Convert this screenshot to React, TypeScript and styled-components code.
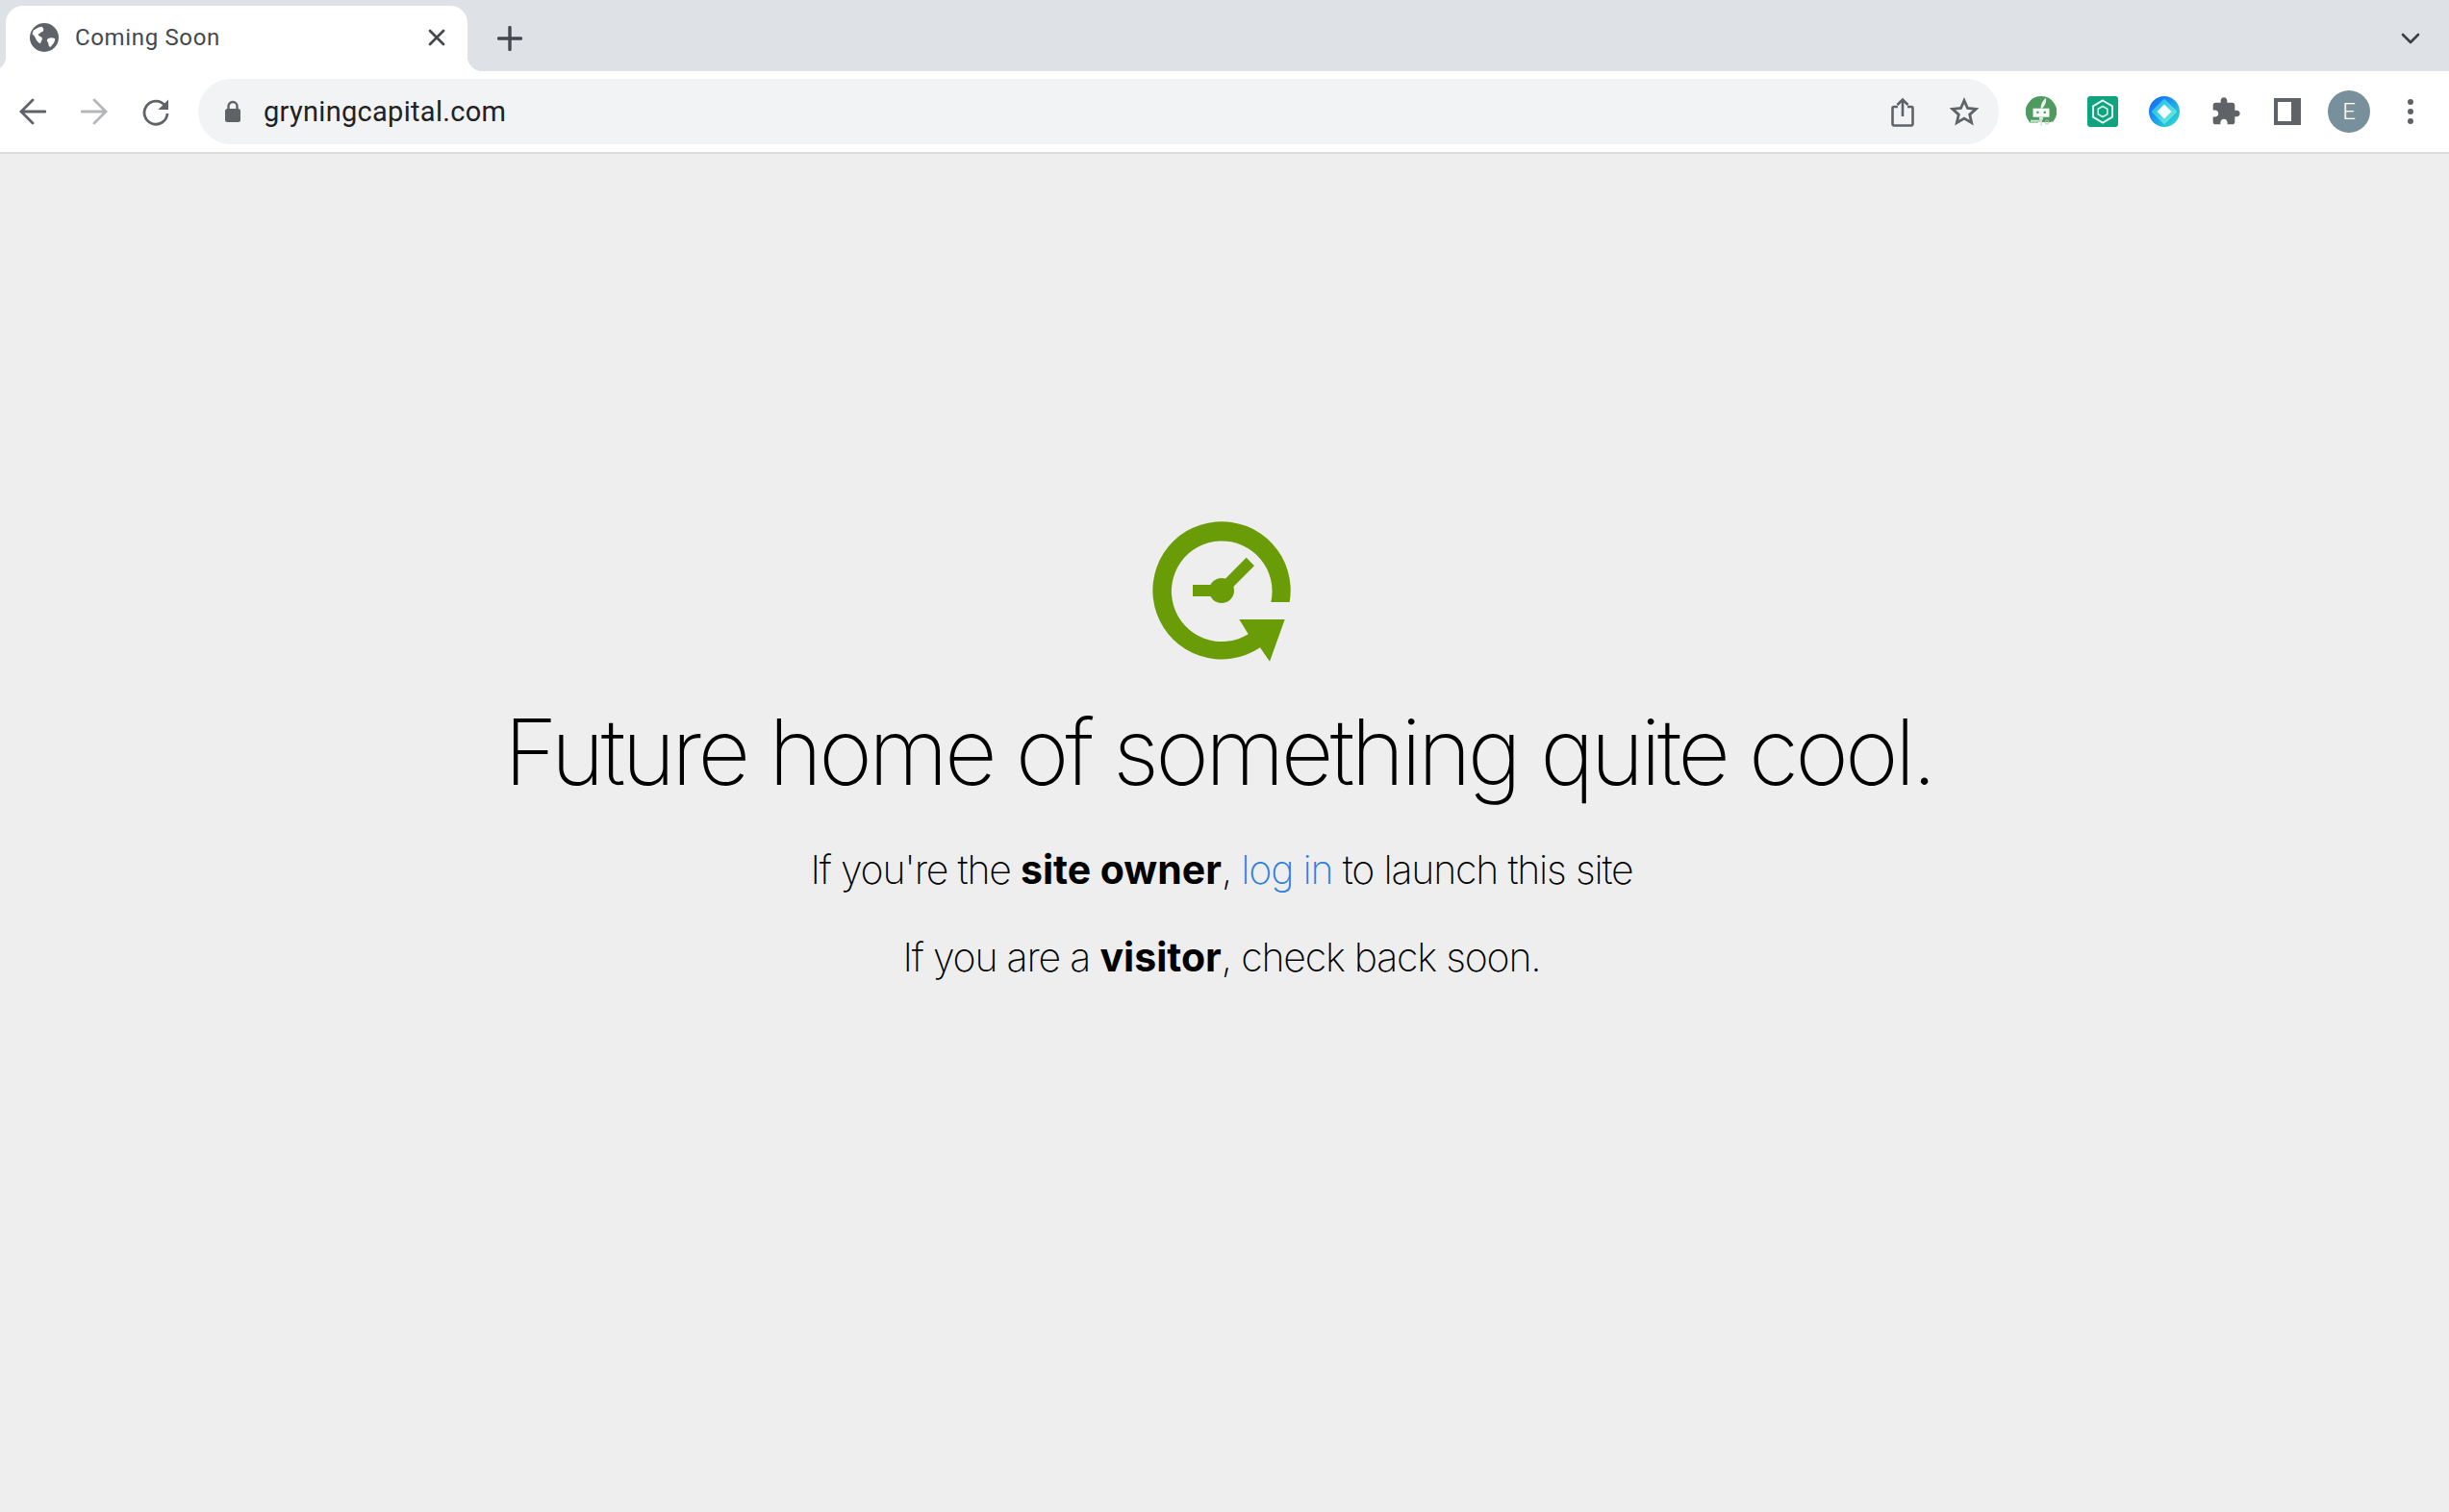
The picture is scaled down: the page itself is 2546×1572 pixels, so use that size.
import React from "react";
import styled, { createGlobalStyle } from "styled-components";

const GlobalStyle = createGlobalStyle`
  html, body {
    margin: 0;
    padding: 0;
    background: #eeeeee;
  }
  body {
    font-family: "Inter", "Liberation Sans", sans-serif;
  }
`;

const Page = styled.div`
  width: 2546px;
  height: 1572px;
  display: flex;
  flex-direction: column;
  overflow: hidden;
  background: #eeeeee;
`;

const TabStrip = styled.div`
  height: 74px;
  flex: none;
  display: flex;
  align-items: flex-end;
  background: #dee1e6;
  padding-left: 6px;
`;

const Tab = styled.div`
  position: relative;
  width: 480px;
  height: 68px;
  display: flex;
  align-items: center;
  box-sizing: border-box;
  padding: 0 22px 2px 25px;
  background: #ffffff;
  border-radius: 18px 18px 0 0;

  &::before,
  &::after {
    content: "";
    position: absolute;
    bottom: 0;
    width: 16px;
    height: 16px;
  }
  &::before {
    left: -16px;
    background: radial-gradient(circle at 0 0, transparent 16px, #ffffff 16.5px);
  }
  &::after {
    right: -16px;
    background: radial-gradient(circle at 100% 0, transparent 16px, #ffffff 16.5px);
  }
`;

const TabTitle = styled.span`
  flex: 1;
  margin-left: 17px;
  font-family: "Roboto", sans-serif;
  font-size: 24px;
  letter-spacing: 0.65px;
  color: #45494e;
`;

const StripButton = styled.div<{ $push?: boolean }>`
  width: 40px;
  height: 68px;
  display: flex;
  align-items: center;
  justify-content: center;
  margin-left: ${(p) => (p.$push ? "auto" : "24px")};
  margin-right: ${(p) => (p.$push ? "20px" : "0")};
`;

const Toolbar = styled.div`
  height: 84px;
  flex: none;
  box-sizing: content-box;
  display: flex;
  align-items: center;
  padding: 0 8px 0 2px;
  background: #ffffff;
  border-bottom: 2px solid #dcdcdc;
`;

const ToolButton = styled.div`
  width: 64px;
  height: 64px;
  flex: none;
  display: flex;
  align-items: center;
  justify-content: center;
`;

const Omnibox = styled.div`
  flex: 1;
  height: 68px;
  margin: 0 12px;
  display: flex;
  align-items: center;
  padding-left: 27px;
  padding-right: 4px;
  background: #f1f3f4;
  border-radius: 34px;
`;

const Url = styled.span`
  flex: 1;
  margin-left: 23px;
  font-family: "Roboto", sans-serif;
  font-size: 29px;
  letter-spacing: 0.3px;
  color: #202124;
`;

const Avatar = styled.div`
  width: 44px;
  height: 44px;
  border-radius: 50%;
  background: #78909c;
  color: #ffffff;
  display: flex;
  align-items: center;
  justify-content: center;
  font-family: "Roboto", sans-serif;
  font-size: 24px;
  font-weight: 300;
`;

const Main = styled.main`
  flex: 1;
  display: flex;
  flex-direction: column;
  align-items: center;
  padding-top: 350px;
`;

const Logo = styled.svg`
  display: block;
  width: 230px;
  height: 190px;
  margin-right: 16px;
`;

const Heading = styled.h1`
  margin: 27px 12px 0 0;
  font-family: "Inter", sans-serif;
  font-weight: 200;
  font-size: 95px;
  line-height: 110px;
  letter-spacing: -3.8px;
  color: #000000;
  white-space: nowrap;
`;

const Messages = styled.div`
  margin-top: 22px;
  margin-right: 6px;
`;

const MessageRow = styled.p`
  margin: 0;
  height: 91px;
  font-family: "Inter", sans-serif;
  font-weight: 200;
  font-size: 41px;
  line-height: 91px;
  letter-spacing: -1.2px;
  color: #000000;
  white-space: nowrap;
  text-align: center;

  strong {
    font-weight: 700;
    letter-spacing: 0;
  }
`;

const LoginLink = styled.a`
  color: #2f7fe0;
  text-decoration: none;
`;

const GLOBE = "#5f6368";

function Globe() {
  return (
    <svg width="30" height="30" viewBox="0 0 24 24">
      <circle cx="12" cy="12" r="12" fill={GLOBE} />
      <path
        d="M3 6c2-1 4-3 7-3 1 1 2 2 1 4-2 0-2 2-4 2 0 2 2 2 3 3 1 2-1 3-1 5-3-1-4-4-5-6L2 9zM15 13c2-1 4-1 6 0 0 3-2 5-4 7-2-1-1-3-2-4-1-1-1-2 0-3z"
        fill="#ffffff"
      />
    </svg>
  );
}

function CloseGlyph() {
  return (
    <svg width="20" height="20" viewBox="0 0 20 20">
      <path d="M3 3l14 14M17 3L3 17" stroke="#45494e" strokeWidth="2.8" strokeLinecap="round" />
    </svg>
  );
}

function Plus() {
  return (
    <svg width="26" height="26" viewBox="0 0 26 26">
      <path d="M13 1.5v23M1.5 13h23" stroke="#45494e" strokeWidth="3.4" strokeLinecap="round" />
    </svg>
  );
}

function Chevron() {
  return (
    <svg width="20" height="12" viewBox="0 0 20 12">
      <path d="M2 2l8 8 8-8" fill="none" stroke="#3c4043" strokeWidth="2.6" strokeLinecap="round" strokeLinejoin="round" />
    </svg>
  );
}

function Arrow({ color, flip }: { color: string; flip?: boolean }) {
  return (
    <svg width="28" height="28" viewBox="0 0 28 28" style={flip ? { transform: "scaleX(-1)" } : undefined}>
      <path d="M27 14H2M14 2L2 14l12 12" fill="none" stroke={color} strokeWidth="2.8" strokeLinejoin="miter" strokeLinecap="round" />
    </svg>
  );
}

function Reload() {
  return (
    <svg width="30" height="30" viewBox="0 0 30 30">
      <path d="M24.5 8.8A12 12 0 1 0 27 17" fill="none" stroke="#5f6368" strokeWidth="2.8" />
      <path d="M28 2.5V13H17.5z" fill="#5f6368" />
    </svg>
  );
}

function Lock() {
  return (
    <svg width="18" height="24" viewBox="0 0 18 24">
      <path d="M4.5 10V6.5a4.5 4.5 0 0 1 9 0V10" fill="none" stroke="#5f6368" strokeWidth="2.4" />
      <rect x="1" y="9" width="16" height="14" rx="2.5" fill="#5f6368" />
    </svg>
  );
}

function Share() {
  return (
    <svg width="24" height="31" viewBox="0 0 24 31">
      <path d="M7 10H3a1.500 1.500 0 0 0-1.500 1.500V28a1.500 1.500 0 0 0 1.500 1.500h18a1.500 1.500 0 0 0 1.500-1.500V11.500A1.500 1.500 0 0 0 21 10h-4" fill="none" stroke="#5f6368" strokeWidth="2.6" />
      <path d="M12 20V2.500M6.500 8L12 2.500 17.500 8" fill="none" stroke="#5f6368" strokeWidth="2.6" />
    </svg>
  );
}

function Star() {
  return (
    <svg width="30" height="30" viewBox="0 0 30 30">
      <path d="M15 3.500l3.500 8 8.800.8-6.600 5.800 2 8.600-7.700-4.600-7.700 4.600 2-8.600-6.600-5.800 8.800-.8z" fill="none" stroke="#5f6368" strokeWidth="2.800" strokeLinejoin="miter" />
    </svg>
  );
}

function RobotExtension() {
  return (
    <svg width="32" height="32" viewBox="0 0 32 32">
      <path d="M16 0a16 16 0 0 1 14 24l-2 3H4l-2-3A16 16 0 0 1 16 0z" fill="#4f9a5f" />
      <path d="M15.500 12.700c0-4.500 2-8.500 5.500-11 .6 4.500-1 8.500-4 11z" fill="#e4f1e7" />
      <rect x="7.500" y="12.700" width="17" height="9" fill="#f6fbf7" />
      <rect x="11.300" y="15.700" width="2.200" height="2.200" fill="#4f9a5f" />
      <rect x="18.700" y="15.700" width="2.200" height="2.200" fill="#4f9a5f" />
      <rect x="14" y="21.700" width="4" height="3" fill="#d6e9da" />
      <path d="M5 24.700h12v6h-1.500v-4H5z" fill="#cfe5d4" />
      <circle cx="22" cy="27" r="2" fill="none" stroke="#a8d0b2" strokeWidth="1" />
      <path d="M4 27h9v1H4zM26 26h3v1h-3z" fill="#a8d0b2" />
    </svg>
  );
}

function HexExtension() {
  return (
    <svg width="32" height="32" viewBox="0 0 32 32">
      <rect width="32" height="32" rx="3" fill="#10a37f" />
      <path d="M16 4.500l10 5.800v11.400l-10 5.800-10-5.800V10.300z" fill="none" stroke="#e6f6f2" strokeWidth="2" />
      <path d="M16 10.500l4.800 2.800v5.400L16 21.500l-4.800-2.800v-5.400z" fill="none" stroke="#d4f0e8" strokeWidth="1.600" />
    </svg>
  );
}

function DiamondExtension() {
  return (
    <svg width="32" height="32" viewBox="0 0 32 32">
      <defs>
        <linearGradient id="diamondGrad" x1="0" y1="0" x2="1" y2="1">
          <stop offset="0" stopColor="#1560ea" />
          <stop offset="0.45" stopColor="#1b9bf0" />
          <stop offset="1" stopColor="#2fe5c4" />
        </linearGradient>
        <linearGradient id="ribbonGrad" x1="0" y1="0" x2="1" y2="1">
          <stop offset="0" stopColor="#22b6f2" />
          <stop offset="1" stopColor="#6ff0d6" />
        </linearGradient>
      </defs>
      <circle cx="16" cy="16" r="16" fill="url(#diamondGrad)" />
      <path d="M16 4.500L27.500 16 16 27.500 4.500 16z" fill="url(#ribbonGrad)" stroke="url(#ribbonGrad)" strokeWidth="3" strokeLinejoin="round" />
      <path d="M16 8.500l7.500 7.500-7.500 7.500L8.500 16z" fill="#f4fffd" />
    </svg>
  );
}

function Puzzle() {
  return (
    <svg width="32" height="32" viewBox="0 0 24 24">
      <path
        d="M20.500 11H19V7c0-1.100-.9-2-2-2h-4V3.500C13 2.120 11.880 1 10.500 1S8 2.120 8 3.500V5H4c-1.100 0-1.990.9-1.990 2v3.800H3.500c1.490 0 2.700 1.210 2.700 2.700s-1.210 2.700-2.700 2.700H2V20c0 1.100.9 2 2 2h3.800v-1.500c0-1.490 1.210-2.700 2.700-2.700 1.490 0 2.700 1.210 2.700 2.700V22H17c1.100 0 2-.9 2-2v-4h1.500c1.380 0 2.500-1.120 2.500-2.500S21.880 11 20.500 11z"
        fill="#5f6368"
      />
    </svg>
  );
}

function SidePanel() {
  return (
    <svg width="28" height="28" viewBox="0 0 28 28">
      <rect width="28" height="28" fill="#5f6368" />
      <rect x="4" y="4" width="14" height="20" fill="#ffffff" />
    </svg>
  );
}

function Dots() {
  return (
    <svg width="8" height="28" viewBox="0 0 8 28">
      <circle cx="4" cy="4" r="3" fill="#5f6368" />
      <circle cx="4" cy="14" r="3" fill="#5f6368" />
      <circle cx="4" cy="24" r="3" fill="#5f6368" />
    </svg>
  );
}

export default function App() {
  return (
    <Page>
      <GlobalStyle />
      <TabStrip>
        <Tab>
          <Globe />
          <TabTitle>Coming Soon</TabTitle>
          <CloseGlyph />
        </Tab>
        <StripButton>
          <Plus />
        </StripButton>
        <StripButton $push>
          <Chevron />
        </StripButton>
      </TabStrip>
      <Toolbar>
        <ToolButton>
          <Arrow color="#5f6368" />
        </ToolButton>
        <ToolButton>
          <Arrow color="#b4b6b9" flip />
        </ToolButton>
        <ToolButton>
          <Reload />
        </ToolButton>
        <Omnibox>
          <Lock />
          <Url>gryningcapital.com</Url>
          <ToolButton>
            <Share />
          </ToolButton>
          <ToolButton>
            <Star />
          </ToolButton>
        </Omnibox>
        <ToolButton>
          <RobotExtension />
        </ToolButton>
        <ToolButton>
          <HexExtension />
        </ToolButton>
        <ToolButton>
          <DiamondExtension />
        </ToolButton>
        <ToolButton>
          <Puzzle />
        </ToolButton>
        <ToolButton>
          <SidePanel />
        </ToolButton>
        <ToolButton>
          <Avatar>E</Avatar>
        </ToolButton>
        <ToolButton>
          <Dots />
        </ToolButton>
      </Toolbar>
      <Main>
        <Logo viewBox="0 0 690 570">
          <path
            d="M572 348A215 215 0 1 0 480 490L510 533L557 402L415 402L443 448A157 157 0 1 1 514 348Z"
            fill="#6a9c07"
          />
          <circle cx="360" cy="312" r="39" fill="#6a9c07" />
          <rect x="270" y="294" width="70" height="36" fill="#6a9c07" />
          <path d="M437 209L462 235L390 307L365 282Z" fill="#6a9c07" />
        </Logo>
        <Heading>Future home of something quite cool.</Heading>
        <Messages>
          <MessageRow>
            If you're the <strong>site owner</strong>, <LoginLink href="#">log in</LoginLink> to launch this site
          </MessageRow>
          <MessageRow>
            If you are a <strong>visitor</strong>, check back soon.
          </MessageRow>
        </Messages>
      </Main>
    </Page>
  );
}
